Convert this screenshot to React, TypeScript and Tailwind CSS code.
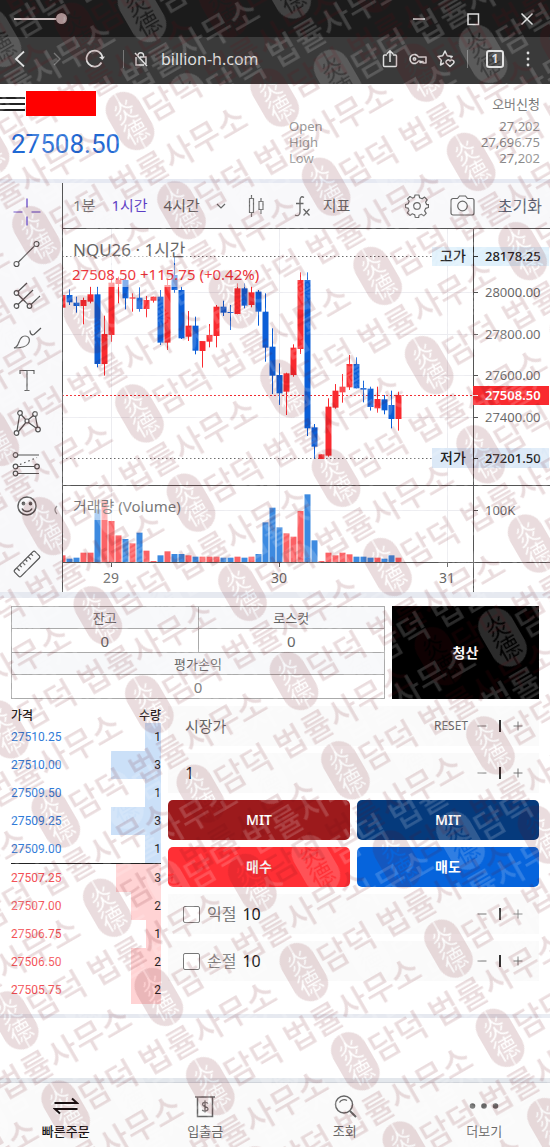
import type { ReactNode } from "react";
import { Minus, Plus } from "lucide-react";

type Side = "up" | "down";

// side, high, body top, body bottom, low, volume; all in thirds of a pixel
type Candle = [Side, number, number, number, number, number];

const candles: Candle[] = [
  ["up", 345, 345, 383, 385, 20],
  ["down", 328, 345, 367, 375, 10],
  ["down", 350, 368, 378, 398, 13],
  ["up", 353, 360, 378, 433, 28],
  ["up", 320, 343, 365, 370, 28],
  ["down", 320, 343, 552, 562, 158],
  ["up", 407, 462, 552, 587, 182],
  ["up", 290, 308, 465, 485, 123],
  ["up", 290, 300, 312, 370, 80],
  ["down", 285, 300, 355, 388, 69],
  ["up", 340, 352, 356, 395, 56],
  ["down", 322, 353, 387, 395, 88],
  ["up", 348, 360, 387, 412, 34],
  ["up", 350, 350, 362, 368, 3],
  ["down", 330, 350, 488, 495, 20],
  ["up", 300, 315, 488, 510, 32],
  ["down", 228, 285, 330, 338, 24],
  ["down", 320, 330, 475, 477, 24],
  ["up", 393, 437, 470, 483, 20],
  ["down", 410, 437, 512, 523, 16],
  ["up", 483, 483, 513, 563, 16],
  ["up", 432, 465, 485, 502, 16],
  ["up", 375, 380, 468, 502, 16],
  ["down", 362, 380, 398, 408, 13],
  ["down", 375, 396, 399, 450, 13],
  ["up", 310, 325, 402, 403, 16],
  ["down", 310, 325, 377, 385, 13],
  ["up", 320, 337, 375, 382, 16],
  ["down", 330, 335, 395, 437, 24],
  ["down", 340, 395, 503, 545, 119],
  ["down", 445, 500, 587, 642, 163],
  ["down", 550, 585, 640, 675, 104],
  ["up", 578, 580, 635, 705, 86],
  ["up", 493, 503, 585, 590, 76],
  ["up", 277, 300, 507, 522, 153],
  ["down", 277, 300, 745, 768, 203],
  ["down", 732, 742, 800, 836, 65],
  ["up", 823, 823, 837, 837, 3],
  ["up", 655, 680, 827, 830, 28],
  ["up", 612, 632, 683, 686, 20],
  ["up", 582, 620, 637, 668, 28],
  ["up", 525, 552, 622, 630, 23],
  ["down", 532, 552, 625, 625, 16],
  ["down", 602, 624, 629, 667, 16],
  ["down", 620, 626, 681, 692, 13],
  ["up", 620, 657, 685, 698, 13],
  ["down", 645, 658, 691, 703, 10],
  ["down", 632, 675, 717, 745, 20],
  ["up", 635, 645, 717, 752, 13],
];

const priceTicks = [
  { label: "28000.00", y: 63 },
  { label: "27800.00", y: 105 },
  { label: "27600.00", y: 146 },
  { label: "27400.00", y: 188 },
];

const dayTicks = [
  { label: "29", x: 49 },
  { label: "30", x: 217 },
  { label: "31", x: 385 },
];

const asks = [
  { price: "27510.25", qty: 1, bar: 16 },
  { price: "27510.00", qty: 3, bar: 50 },
  { price: "27509.50", qty: 1, bar: 16 },
  { price: "27509.25", qty: 3, bar: 50 },
  { price: "27509.00", qty: 1, bar: 16 },
];

const bids = [
  { price: "27507.25", qty: 3, bar: 45 },
  { price: "27507.00", qty: 2, bar: 30 },
  { price: "27506.75", qty: 1, bar: 15 },
  { price: "27506.50", qty: 2, bar: 30 },
  { price: "27505.75", qty: 2, bar: 30 },
];

function BrowserBar() {
  return (
    <div className="text-[#dedede]">
      <div className="flex h-[37px] items-center bg-[#1b1b1b] pr-4 pl-3.5">
        <div className="flex items-center">
          <span className="h-0.5 w-[42px] bg-[#c9bebe]" />
          <span className="size-[11px] rounded-full bg-[#b3a6a6]" />
        </div>
        <div className="ml-auto flex items-center gap-10">
          <button aria-label="Minimize">
            <svg width="14" height="14" stroke="currentColor" strokeWidth="1.5"><path d="M1 7h12" /></svg>
          </button>
          <button aria-label="Maximize">
            <svg width="14" height="14" fill="none" stroke="currentColor" strokeWidth="1.5"><path d="M2 2h10.500v10.500H2z" /></svg>
          </button>
          <button aria-label="Close">
            <svg width="14" height="14" stroke="currentColor" strokeWidth="1.5"><path d="M1.500 1.500l11 11M12.500 1.500l-11 11" /></svg>
          </button>
        </div>
      </div>
      <div className="flex h-[47px] items-center bg-[#3a3a3a] pr-[18px] pb-1 pl-3.5">
        <button aria-label="Back">
          <svg width="12" height="18" fill="none" stroke="currentColor" strokeWidth="1.8"><path d="M10 1.500L2 9l8 7.500" /></svg>
        </button>
        <button aria-label="Forward" className="ml-[26px] text-[#777]">
          <svg width="10" height="18" fill="none" stroke="currentColor" strokeWidth="1.4"><path d="M2 3l6 6-6 6" /></svg>
        </button>
        <button aria-label="Reload" className="ml-[23px]">
          <svg width="20" height="20" fill="none" stroke="currentColor" strokeWidth="1.7">
            <path d="M16.500 13.500A8 8 0 1 1 17.500 9" />
            <path d="M14 8l3.500 3L20 7.500z" fill="currentColor" stroke="none" />
          </svg>
        </button>
        <span className="ml-[18px] h-[18px] w-px bg-[#777]" />
        <svg className="ml-2.5" width="14" height="16" fill="none" stroke="currentColor" strokeWidth="1.4">
          <path d="M4 6V4.500a2.800 2.800 0 0 1 5.600 0V6M6 6h6v7M10 14H2V6M1 2l12 13" />
        </svg>
        <span className="ml-[13px] text-base">billion-h.com</span>
        <button aria-label="Share" className="ml-auto">
          <svg width="16" height="20" fill="none" stroke="currentColor" strokeWidth="1.5">
            <path d="M5 6H2.500A1 1 0 0 0 1.500 7v9.500a1 1 0 0 0 1 1h11a1 1 0 0 0 1-1V7a1 1 0 0 0-1-1H11M8 13V2M4.800 5L8 1.800 11.200 5" />
          </svg>
        </button>
        <button aria-label="Passwords" className="ml-[11px]">
          <svg width="18" height="14" fill="none" stroke="currentColor" strokeWidth="1.600">
            <path d="M9.500 5A4.500 4.500 0 1 0 9.500 9H11v1.500h1.500V9.500h1.500v1.500h3V5z" strokeLinejoin="round" />
            <circle cx="5.500" cy="7" r="1.200" />
          </svg>
        </button>
        <button aria-label="Favorites" className="ml-2.5">
          <svg width="18" height="20" fill="none" stroke="currentColor" strokeWidth="1.500" strokeLinejoin="round">
            <path d="M7 14l-3.500 2 .8-4.800L1 7.500l4.700-.7L8 2l2.200 4.800 5 .7-1.600 1.700" />
            <path d="M13 17.500l-3.600-3.300a2 2 0 0 1 3.600-2.200 2 2 0 0 1 3.600 2.200z" />
          </svg>
        </button>
        <span className="ml-3 h-[18px] w-px bg-[#777]" />
        <button className="ml-[18px] size-[18px] rounded-[3px] border-2 border-[#dedede] text-xs leading-none font-bold">1</button>
        <button aria-label="Menu" className="ml-[22px] mr-0.5">
          <svg width="4" height="16" fill="currentColor"><circle cx="2" cy="2" r="1.400" /><circle cx="2" cy="8" r="1.400" /><circle cx="2" cy="14" r="1.400" /></svg>
        </button>
      </div>
    </div>
  );
}

function QuoteHeader() {
  return (
    <header className="flex h-[99px] justify-between border-b-4 border-[#e6e9f2] bg-white pr-2.5">
      <div className="pt-[7px]">
        <div className="flex items-center">
          <button aria-label="메뉴" className="flex w-[25px] flex-col gap-1">
            <span className="h-0.5 bg-[#222]" />
            <span className="h-0.5 bg-[#222]" />
            <span className="h-0.5 bg-[#222]" />
          </button>
          <span className="relative z-10 ml-px h-[25px] w-[70px] bg-[#ff0000]" />
        </div>
        <p className="mt-2.5 pl-[11px] font-[Roboto] text-[26px] leading-9 text-[#1f69d4]">27508.50</p>
      </div>
      <div className="w-[251px] pt-2.5 text-[13px] text-[#888]">
        <p className="text-right leading-5 text-[#777]">오버신청</p>
        <dl className="mt-1 grid grid-cols-2 leading-4">
          <dt className="text-[#999]">Open</dt>
          <dd className="text-right">27,202</dd>
          <dt className="text-[#999]">High</dt>
          <dd className="text-right">27,696.75</dd>
          <dt className="text-[#999]">Low</dt>
          <dd className="text-right">27,202</dd>
        </dl>
      </div>
    </header>
  );
}

function ToolButton({ label, children }: { label: string; children: ReactNode }) {
  return (
    <button aria-label={label} className="flex h-[42px] w-[54px] items-center justify-center">
      <svg width="30" height="30" fill="none" stroke="currentColor" strokeWidth="1.2">
        {children}
      </svg>
    </button>
  );
}

function DrawingTools() {
  return (
    <aside className="relative flex w-[63px] shrink-0 flex-col border-r border-[#555] bg-[#f8f8fa] pt-2 text-[#555]">
      <div className="text-[#5b3cc4]">
        <ToolButton label="십자선">
          <path d="M15 1.500v9M15 19.500v9M1.500 15h9M19.500 15h9" />
        </ToolButton>
      </div>
      <ToolButton label="추세선">
        <circle cx="4.500" cy="25" r="2.500" />
        <circle cx="24.500" cy="5" r="2.500" />
        <path d="M6.500 23L22.500 7" />
      </ToolButton>
      <ToolButton label="피치포크">
        <circle cx="4.500" cy="12" r="2.300" />
        <circle cx="4.500" cy="25" r="2.300" />
        <circle cx="17.500" cy="25" r="2.300" />
        <path d="M6 10.500L15 2M6 23.500L21 9M19 23.500L28 15M6 13.500L16 23.500" />
      </ToolButton>
      <ToolButton label="브러시">
        <path d="M2 25c5 0 11 0 14-4s1-8-3-8c-3 0-5 3-6 6s-2 5-5 6z" />
        <path d="M18 7.500c0 3 1.500 5 4 4l7-6.500" />
      </ToolButton>
      <ToolButton label="텍스트">
        <path d="M8 9V5.500h14V9M15 5.500v20M12.500 25.500h5" />
      </ToolButton>
      <ToolButton label="패턴">
        <circle cx="4.500" cy="26" r="2.300" />
        <circle cx="8" cy="6" r="2.300" />
        <circle cx="15" cy="14" r="2" />
        <circle cx="23" cy="7" r="2.300" />
        <circle cx="26" cy="22.500" r="2.300" />
        <path d="M5 23.700L7.500 8.300M6.500 24.500l7-8.500M9.500 8l4 4.500M16.500 12.500l5-4M16.500 15.500l7.500 5.500M23.500 9.300l2 11" />
      </ToolButton>
      <ToolButton label="예측">
        <circle cx="3.500" cy="6" r="2.300" />
        <circle cx="3.500" cy="17.500" r="2.300" />
        <circle cx="25" cy="17.500" r="2.300" />
        <circle cx="3.500" cy="24.500" r="2.300" />
        <path d="M6 6h21M6 17.500h16.500M6 24.500h21" />
        <path d="M8 15.500L25 8.500" strokeDasharray="1.500 3" />
      </ToolButton>
      <ToolButton label="아이콘">
        <circle cx="15" cy="15" r="9" strokeWidth="1.500" />
        <circle cx="11.500" cy="12.500" r="1.300" fill="currentColor" />
        <circle cx="18.500" cy="12.500" r="1.300" fill="currentColor" />
        <path d="M10 17.500c2 4 8 4 10 0" strokeWidth="1.500" />
      </ToolButton>
      <div className="mt-4">
        <ToolButton label="측정">
          <g transform="rotate(-45 15 15)">
            <rect x="0.500" y="10.500" width="29" height="9" rx="1.500" />
            <path d="M5 10.500v4M9 10.500v3M13 10.500v4M17 10.500v3M21 10.500v4M25 10.500v3" />
          </g>
        </ToolButton>
      </div>
      <button aria-label="도구 접기" className="absolute right-1 bottom-[77px]">
        <svg width="5" height="10" fill="none" stroke="#999" strokeWidth="1.200"><path d="M4 1Q0 5 4 9" /></svg>
      </button>
    </aside>
  );
}

function ChartToolbar() {
  return (
    <div className="flex h-[46px] items-center border-b border-[#555] bg-[#f8f8fa] pr-2 pl-2.5 text-[15px] text-[#666]">
      <button className="whitespace-nowrap">1분</button>
      <button className="ml-4 whitespace-nowrap text-[#5b3cc4]">1시간</button>
      <button className="ml-4 whitespace-nowrap">4시간</button>
      <button aria-label="더 많은 간격" className="ml-4">
        <svg width="10" height="6" fill="none" stroke="currentColor" strokeWidth="1.200"><path d="M1 1l4 4 4-4" /></svg>
      </button>
      <button aria-label="차트 종류" className="ml-[22px]">
        <svg width="17" height="24" fill="none" stroke="currentColor" strokeWidth="1.200">
          <path d="M1.500 4.500h4v14h-4zM3.500 1v3.500M3.500 18.500V23M11 7.500h4v8h-4zM13 4v3.500M13 15.500V20" />
        </svg>
      </button>
      <button className="ml-7 flex items-center gap-3 whitespace-nowrap">
        <svg width="18" height="22" fill="none" stroke="currentColor" strokeWidth="1.300">
          <path d="M11 2.500c-3-2-4 .5-4 3V17c0 3-2 4.500-5 3M3 8.500h7.500M10.500 14l6 6.500M16.500 14l-6 6.500" />
        </svg>
        지표
      </button>
      <button aria-label="설정" className="ml-auto">
        <svg width="24" height="24" viewBox="-12 -12 24 24" fill="none" stroke="currentColor" strokeWidth="1.200" strokeLinejoin="round">
          <path d="M-2 -11h4l.6 2.800 2.500 1 2.500-1.700 2.600 2.700-1.600 2.400 1 2.400L11.500 -1.500v3L8.600 2.400l-1 2.500 1.600 2.400-2.400 2.500-2.500-1.600-2.300 1L1.700 11.500h-3.400L-2.300 8.700l-2.400-1-2.400 1.700-2.600-2.500 1.700-2.500-1-2.300L-11.500 1.500v-3L-8.900 -2.100l1-2.500L-9.500 -7l2.400-2.500 2.500 1.600 2.100-1z" />
          <circle r="3.300" />
        </svg>
      </button>
      <button aria-label="스크린샷" className="ml-[21px]">
        <svg width="25" height="21" fill="none" stroke="currentColor" strokeWidth="1.200">
          <path d="M3 3.500h4.500L9.500 1h6l2 2.500H22a2 2 0 0 1 2 2V18a2 2 0 0 1-2 2H3a2 2 0 0 1-2-2V5.500a2 2 0 0 1 2-2z" />
          <circle cx="12.500" cy="11" r="4.800" />
        </svg>
      </button>
      <button className="ml-[23px] text-base whitespace-nowrap text-[#5a6272]">초기화</button>
    </div>
  );
}

function PriceChart() {
  return (
    <svg viewBox="1 0 487 363" className="block h-auto w-full bg-white" fontSize="13" fill="#666">
      <g stroke="#ececf0">
        {priceTicks.map((t) => (
          <path key={t.label} d={`M0 ${t.y + 0.5}H411`} />
        ))}
        <path d="M0 281.500H411" />
        {dayTicks.map((t) => (
          <path key={t.label} d={`M${t.x + 0.5} 0V333`} />
        ))}
      </g>
      <g stroke="#666" strokeDasharray="1.500 2.500">
        <path d="M0 27.500H370" />
        <path d="M0 229.500H370" />
      </g>
      <path d="M0 166.500H411" stroke="#f0282d" strokeDasharray="2 2" />

      {candles.map(([side, high, top, bottom, low, volume], i) => {
        const x = i * 7;
        const y = (v: number) => v / 3 - 49;
        const color = side === "up" ? "#f92a2f" : "#0b5ed7";
        return (
          <g key={i}>
            <rect x={x} y={y(high)} width="1" height={(low - high) / 3} fill={color} />
            <rect x={x - 2.5} y={y(top)} width="6" height={Math.max((bottom - top) / 3, 1)} fill={color} />
            <rect x={x - 2.5} y={333 - volume / 3} width="6" height={volume / 3} fill={side === "up" ? "#fb6165" : "#3d8ae0"} />
          </g>
        );
      })}

      <g fill="#fff" opacity="0.5">
        <rect x="8" y="10" width="120" height="24" />
        <rect x="8" y="36" width="188" height="22" />
        <rect x="8" y="267" width="115" height="24" />
      </g>
      <text x="11" y="27" fontSize="17">NQU26 · 1시간</text>
      <text x="10" y="51" fontSize="15" fill="#ee3338">27508.50 +115.75 (+0.42%)</text>
      <text x="11" y="283" fontSize="15" fill="#777">거래량 (Volume)</text>

      <g stroke="#555">
        <path d="M411.500 0V363M0 256.500H488M0 333.500H488" />
        {priceTicks.map((t) => (
          <path key={t.label} d={`M411 ${t.y + 0.5}h5`} />
        ))}
        <path d="M411 281.500h5" />
        {dayTicks.map((t) => (
          <path key={t.label} d={`M${t.x + 0.5} 333v5`} />
        ))}
      </g>
      {priceTicks.map((t) => (
        <text key={t.label} x="423" y={t.y + 5}>{t.label}</text>
      ))}
      <text x="423" y="286">100K</text>
      {dayTicks.map((t) => (
        <text key={t.label} x={t.x} y="354" textAnchor="middle" fontSize="14">{t.label}</text>
      ))}

      <rect x="370" y="18" width="117" height="19" fill="#dff0fb" />
      <rect x="370" y="219" width="117" height="20" fill="#dce9f7" />
      <rect x="411" y="157" width="76" height="19" fill="#f92a2f" />
      <path d="M411.500 18v19M411.500 219v20M411 27.500h5M411 229.500h5" stroke="#333" />
      <path d="M411 166.500h5" stroke="#fff" />
      <g fill="#222" fontWeight="500">
        <text x="378" y="32" fontSize="14">고가</text>
        <text x="423" y="32">28178.25</text>
        <text x="378" y="234" fontSize="14">저가</text>
        <text x="423" y="234">27201.50</text>
      </g>
      <text x="423" y="171" fill="#fff" fontWeight="600">27508.50</text>
    </svg>
  );
}

function AccountSummary() {
  const head = "h-[22px] border border-[#aaa] bg-[#f7f8fa] p-0 font-normal leading-5";
  const cell = "h-6 border border-[#aaa] bg-white p-0 text-[15px] leading-5";
  return (
    <section className="flex gap-[7px] px-[11px] pt-2">
      <table className="flex-1 border-collapse text-center text-[13px] text-[#666]">
        <tbody>
          <tr>
            <th className={`${head} w-1/2`}>잔고</th>
            <th className={`${head} w-1/2`}>로스컷</th>
          </tr>
          <tr>
            <td className={cell}>0</td>
            <td className={cell}>0</td>
          </tr>
          <tr>
            <th colSpan={2} className={head}>평가손익</th>
          </tr>
          <tr>
            <td colSpan={2} className={cell}>0</td>
          </tr>
        </tbody>
      </table>
      <button className="w-[147px] bg-black text-sm font-bold text-white">청산</button>
    </section>
  );
}

function BookRow({ price, qty, bar, side }: { price: string; qty: number; bar: number; side: "ask" | "bid" }) {
  return (
    <tr>
      <td className={`h-7 p-0 ${side === "ask" ? "text-[#2f7bd8]" : "text-[#f35257]"}`}>{price}</td>
      <td className="p-0">
        <div
          className={`ml-auto flex h-7 items-center justify-end text-[#222] ${side === "ask" ? "bg-[#cbe0f8]" : "bg-[#ffd3d4]"}`}
          style={{ width: bar }}
        >
          {qty}
        </div>
      </td>
    </tr>
  );
}

function OrderBook() {
  return (
    <table className="w-[150px] shrink-0 self-start border-collapse font-[Roboto,'Noto_Sans_CJK_KR',sans-serif] text-xs">
      <thead>
        <tr className="leading-[14px] text-[#222]">
          <th className="p-0 pt-[3px] text-left font-medium">가격</th>
          <th className="p-0 pt-[3px] text-right font-medium">수량</th>
        </tr>
      </thead>
      <tbody>
        {asks.map((row) => (
          <BookRow key={row.price} {...row} side="ask" />
        ))}
      </tbody>
      <tbody className="border-t border-[#222]">
        {bids.map((row) => (
          <BookRow key={row.price} {...row} side="bid" />
        ))}
      </tbody>
    </table>
  );
}

function Stepper() {
  return (
    <div className="flex items-center gap-2.5 text-[#666]">
      <button type="button" aria-label="감소"><Minus size={14} strokeWidth={1.5} /></button>
      <span className="h-3 w-0.5 bg-[#333]" />
      <button type="button" aria-label="증가"><Plus size={14} strokeWidth={1.5} /></button>
    </div>
  );
}

function ExitRow({ id, label }: { id: string; label: string }) {
  return (
    <div className="flex h-10 items-center bg-[#fafafa] pr-3.5 pl-[15px]">
      <input id={id} type="checkbox" className="size-[17px] shrink-0 appearance-none rounded-[2px] border border-[#777] bg-white" />
      <label htmlFor={id} className="ml-[7px] text-base whitespace-nowrap text-[#777]">{label}</label>
      <input aria-label={`${label} 틱`} defaultValue="10" className="ml-1.5 min-w-0 flex-1 bg-transparent text-base text-[#111]" />
      <Stepper />
    </div>
  );
}

function OrderForm() {
  const action = "h-10 rounded-[5px] text-sm font-semibold text-white";
  return (
    <form className="flex min-w-0 flex-1 flex-col gap-[7px]">
      <div className="flex h-10 items-center bg-[#fafafa] pr-3.5 pl-[17px]">
        <span className="text-[15px] text-[#666]">시장가</span>
        <button type="button" className="mr-[7px] ml-auto text-xs text-[#666]">RESET</button>
        <Stepper />
      </div>
      <div className="flex h-10 items-center bg-[#fafafa] pr-3.5 pl-[17px]">
        <input aria-label="수량" defaultValue="1" className="min-w-0 flex-1 bg-transparent text-base text-[#111]" />
        <Stepper />
      </div>
      <div className="grid grid-cols-2 gap-[7px]">
        <button type="button" className={`${action} bg-[#9c1a1c]`}>MIT</button>
        <button type="button" className={`${action} bg-[#053a7c]`}>MIT</button>
        <button type="button" className={`${action} bg-[#ff2f35]`}>매수</button>
        <button type="button" className={`${action} bg-[#0664dc]`}>매도</button>
      </div>
      <ExitRow id="take-profit" label="익절" />
      <ExitRow id="stop-loss" label="손절" />
    </form>
  );
}

function BottomNav() {
  const item = "flex flex-col items-center gap-0.5 pt-2.5";
  return (
    <nav className="-mx-1 grid h-16 grid-cols-4 bg-[#fafafa] text-[13px] leading-5 text-[#666]">
      <a href="#order" className={`${item} font-medium text-[#111]`}>
        <svg width="26" height="26" fill="none" stroke="currentColor" strokeWidth="2">
          <path d="M1.500 10H24L19 5.500M24.500 16H2l5 4.500" />
        </svg>
        빠른주문
      </a>
      <a href="#cash" className={item}>
        <svg width="26" height="26" fill="none" stroke="currentColor" strokeWidth="1.500">
          <path d="M3 4h20M5.500 4v19.500h15V4" />
          <path d="M16 10.500c-1-1.700-5.500-1.700-5.500 1s5.500 1.500 5.500 4.300-4.700 2.700-5.700 1M13 7.500v12" strokeWidth="1.300" />
        </svg>
        입출금
      </a>
      <a href="#history" className={item}>
        <svg width="26" height="26" fill="none" stroke="currentColor" strokeWidth="1.500">
          <circle cx="12" cy="11.500" r="8.500" />
          <path d="M7.500 9.500c1.500-3 5-3.500 7.500-2" strokeWidth="1.200" />
          <path d="M18 18l6 6" strokeWidth="2" />
        </svg>
        조회
      </a>
      <a href="#more" className={item}>
        <svg width="30" height="26" fill="currentColor">
          <circle cx="3.500" cy="13" r="2.800" />
          <circle cx="15" cy="13" r="2.800" />
          <circle cx="26.500" cy="13" r="2.800" />
        </svg>
        더보기
      </a>
    </nav>
  );
}

type StampLayerProps = { id: string; color: string; opacity: number; x: number; y: number };

// Tiled stamp: a seal followed by the firm name, every other row shifted by half a tile
function StampLayer({ id, color, opacity, x, y }: StampLayerProps) {
  const spots = [[20, 51], [157, 0], [157, 103], [-118, 0], [-118, 103]];
  return (
    <g opacity={opacity}>
      <defs>
        <pattern
          id={id}
          width="275"
          height="103"
          patternUnits="userSpaceOnUse"
          patternTransform={`translate(${x} ${y}) rotate(-30) translate(-20 -51)`}
        >
          <mask id={`${id}-cut`} maskUnits="userSpaceOnUse" x="-20" y="-34" width="40" height="68">
            <rect x="-18" y="-31" width="36" height="62" rx="18" fill="#fff" />
            <g fill="#000" fontSize="24" textAnchor="middle">
              <text y="-2">炎</text>
              <text y="21">德</text>
            </g>
            <path d="M0 -31v9M0 22v9" stroke="#000" strokeWidth="1.200" />
          </mask>
          {spots.map(([sx, sy]) => (
            <g key={`${sx},${sy}`} transform={`translate(${sx} ${sy})`} fill={color}>
              <rect x="-18" y="-31" width="36" height="62" rx="18" mask={`url(#${id}-cut)`} />
              <text x="19" y="12" fontSize="33" fontWeight="500">담덕 법률사무소</text>
            </g>
          ))}
        </pattern>
      </defs>
      <rect width="100%" height="100%" fill={`url(#${id})`} />
    </g>
  );
}

function Watermark() {
  return (
    <svg aria-hidden="true" className="pointer-events-none absolute inset-0 h-full w-full">
      <StampLayer id="stamp-light" color="#fff" opacity={0.17} x={142} y={13} />
      <StampLayer id="stamp-red" color="#690810" opacity={0.14} x={130} y={121} />
    </svg>
  );
}

export default function App() {
  return (
    <div className="relative overflow-hidden bg-white font-['Noto_Sans','Noto_Sans_CJK_KR',sans-serif]">
      <BrowserBar />
      <QuoteHeader />
      <section className="flex border-b-[6px] border-[#e6e9f0]">
        <DrawingTools />
        <div className="min-w-0 flex-1">
          <ChartToolbar />
          <PriceChart />
        </div>
      </section>
      <AccountSummary />
      <section className="flex gap-[7px] px-[11px] pt-[7px] pb-2.5">
        <OrderBook />
        <OrderForm />
      </section>
      <div className="h-16 border-t-4 border-[#e6e9f0]" />
      <div className="h-[5px] border-b border-[#d0d4da] bg-[#e3e7ec]" />
      <BottomNav />
      <Watermark />
    </div>
  );
}
